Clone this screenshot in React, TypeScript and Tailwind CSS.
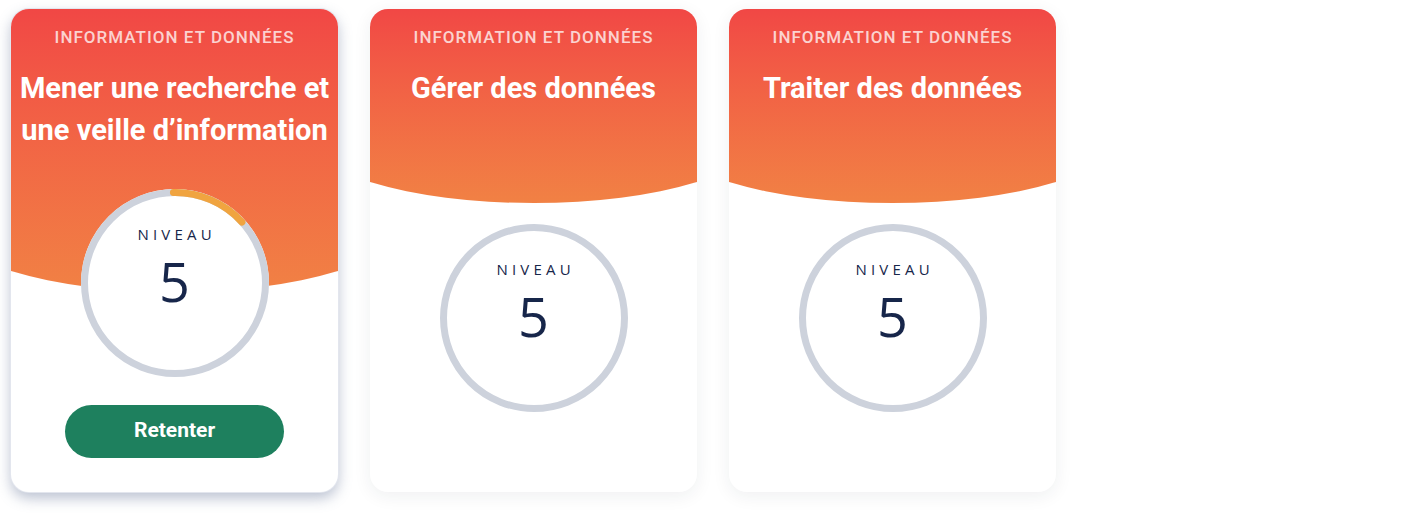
import React from "react";

type Skill = {
  category: string;
  title: string[];
  level: number;
  progress?: number;
  retry?: boolean;
};

const skills: Skill[] = [
  {
    category: "Information et données",
    title: ["Mener une recherche et", "une veille d’information"],
    level: 5,
    progress: 0.135,
    retry: true,
  },
  { category: "Information et données", title: ["Gérer des données"], level: 5 },
  { category: "Information et données", title: ["Traiter des données"], level: 5 },
];

function LevelRing({ level, progress }: { level: number; progress?: number }) {
  const r = 90.5;
  const c = 2 * Math.PI * r;
  return (
    <div className="relative z-10 mx-auto h-[188px] w-[188px] rounded-full bg-white">
      <svg width="188" height="188" viewBox="0 0 188 188" className="absolute inset-0">
        <circle cx="94" cy="94" r={r} fill="none" stroke="#cdd2dc" strokeWidth="7" />
        {progress ? (
          <circle
            cx="94"
            cy="94"
            r={r}
            fill="none"
            stroke="#f0a440"
            strokeWidth="7"
            strokeLinecap="round"
            strokeDasharray={`${c * progress} ${c}`}
            transform="rotate(-91 94 94)"
          />
        ) : null}
      </svg>
      <div className="relative flex flex-col items-center pt-[35px] font-['Open_Sans',sans-serif] text-[#17264a]">
        <span className="pl-[0.28em] text-[15px] leading-[20px] tracking-[0.28em]">NIVEAU</span>
        <span className="mt-[10px] text-[54px] leading-none">{level}</span>
      </div>
    </div>
  );
}

function SkillCard({ skill }: { skill: Skill }) {
  const big = skill.title.length > 1;
  return (
    <div
      className={
        "flex w-[327px] flex-col overflow-hidden rounded-[18px] bg-white " +
        (skill.retry
          ? "shadow-[0_6px_14px_rgba(100,116,150,0.45)] ring-1 ring-[#e3e6ee]"
          : "shadow-[0_4px_18px_rgba(30,40,60,0.07)]")
      }
    >
      <div
        className={
          "-mx-[20%] rounded-b-[50%_70px] bg-linear-to-b from-[#f14745] to-[#f18144] px-[20%] pt-4 text-center font-['Roboto',sans-serif] " +
          (big ? "h-[283px]" : "h-[194px]")
        }
      >
        <div className="text-[17px] font-medium uppercase leading-[24px] tracking-[0.06em] text-white/75">
          {skill.category}
        </div>
        <h2 className="mt-[18px] text-[29px] font-bold leading-[42px] text-white">
          {skill.title.map((line) => (
            <div key={line} className="whitespace-nowrap">
              {line}
            </div>
          ))}
        </h2>
      </div>
      <div className={big ? "-mt-[103px]" : "mt-[21px]"}>
        <LevelRing level={skill.level} progress={skill.progress} />
      </div>
      {skill.retry && (
        <div className="flex justify-center pt-[28px] pb-[34px]">
          <button className="h-[53px] w-[219px] rounded-full bg-[#1e805e] pb-[1px] font-['Roboto',sans-serif] text-[21px] font-bold text-white">
            Retenter
          </button>
        </div>
      )}
    </div>
  );
}

export default function App() {
  return (
    <div className="min-h-[513px] w-full bg-white">
      <div className="flex items-stretch gap-[32px] pl-[11px] pt-[9px]">
        {skills.map((s, i) => (
          <SkillCard key={i} skill={s} />
        ))}
      </div>
    </div>
  );
}
